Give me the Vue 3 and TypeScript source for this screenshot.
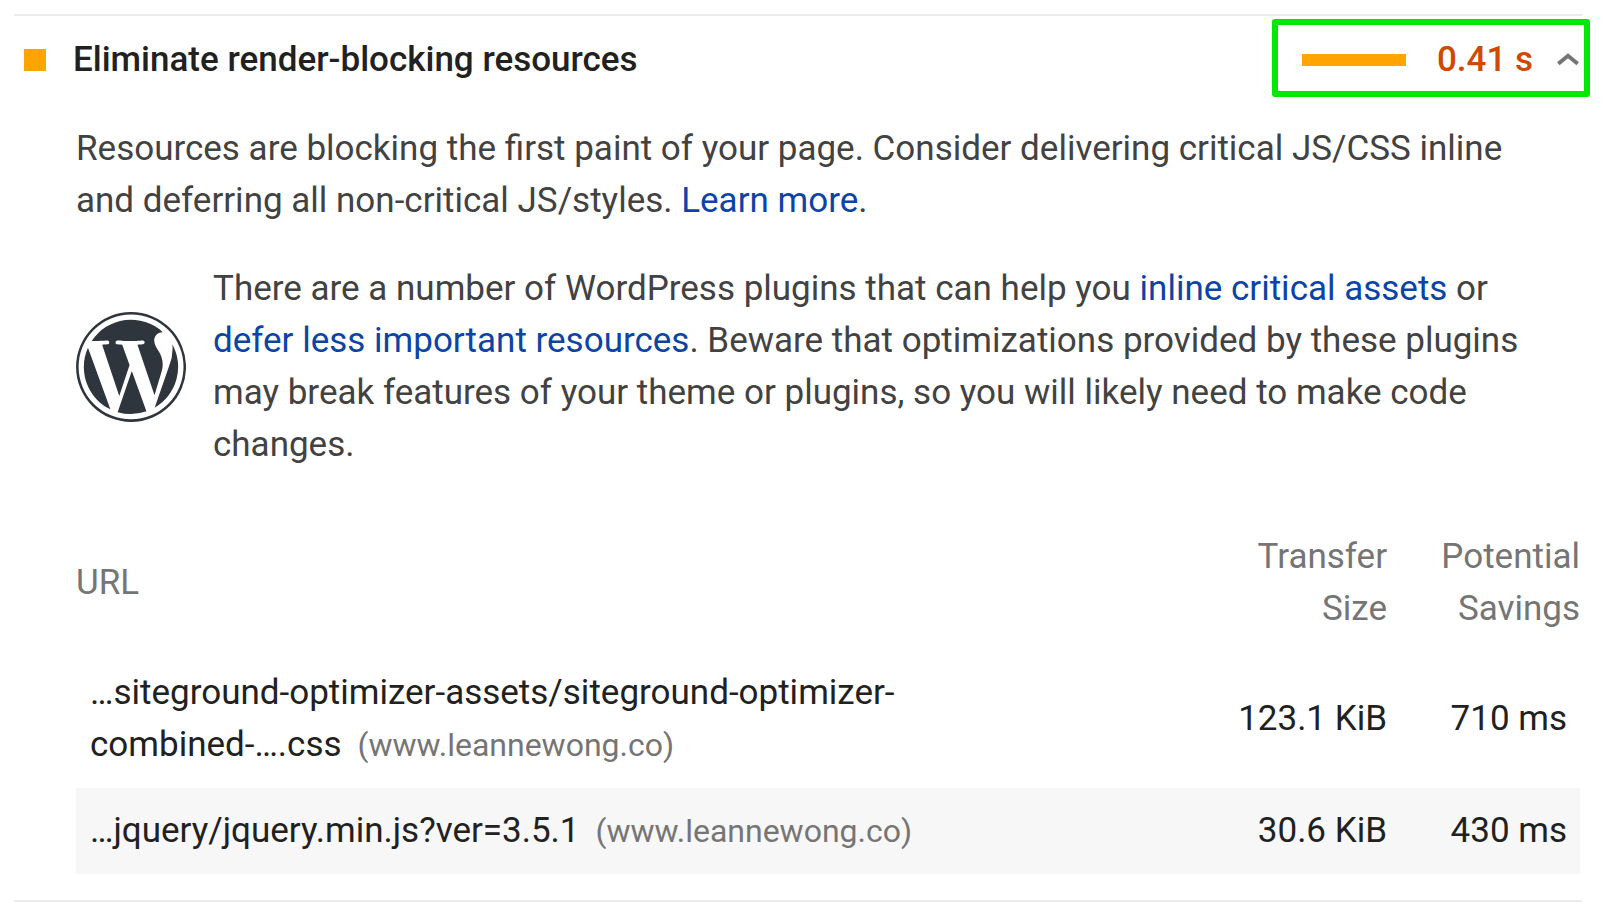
<script setup lang="ts">
import { ref } from 'vue'

interface BlockingResource {
  path: string
  host: string
  size: string
  savings: string
}

const resources: BlockingResource[] = [
  {
    path: '…siteground-optimizer-assets/siteground-optimizer-combined-….css',
    host: 'www.leannewong.co',
    size: '123.1 KiB',
    savings: '710 ms',
  },
  {
    path: '…jquery/jquery.min.js?ver=3.5.1',
    host: 'www.leannewong.co',
    size: '30.6 KiB',
    savings: '430 ms',
  },
]

const open = ref(true)
</script>

<template>
  <main class="report">
    <section class="audit">
      <h2 class="heading">
        <button
          class="summary"
          type="button"
          :aria-expanded="open"
          aria-controls="audit-details"
          @click="open = !open"
        >
          <span class="marker" aria-hidden="true"></span>
          <span class="title">Eliminate render-blocking resources</span>
          <span class="metric">
            <span class="bar" aria-hidden="true"></span>
            <span class="value">0.41 s</span>
            <svg
              class="chevron"
              :class="{ closed: !open }"
              viewBox="0 0 22 12"
              aria-hidden="true"
            >
              <path d="M1.3 9.8 11 1.8l9.7 8" />
            </svg>
          </span>
        </button>
      </h2>

      <div v-show="open" id="audit-details" class="details">
        <p class="text">
          Resources are blocking the first paint of your page. Consider delivering critical JS/CSS
          inline and deferring all non-critical JS/styles. <a href="#learn-more">Learn more</a>.
        </p>

        <div class="stack-pack">
          <svg class="logo" viewBox="0 0 122.6 122.7" role="img" aria-label="WordPress">
            <path
              d="M8.7 61.3c0 20.8 12.1 38.7 29.6 47.3l-25-68.7c-3 6.5-4.6 13.7-4.6 21.4zM96.7 58.6c0-6.5-2.3-11-4.3-14.5-2.7-4.3-5.2-8-5.2-12.3 0-4.8 3.7-9.3 8.9-9.3h.7a52.4 52.4 0 0 0-79.4 9.9h3.3c5.5 0 14-.6 14-.6 2.9-.2 3.2 4 .4 4.3 0 0-2.9.4-6 .5l19.1 57L59.7 59l-8.2-22.5c-2.8-.1-5.5-.5-5.5-.5-2.8-.1-2.5-4.5.3-4.3 0 0 8.7.7 13.9.7 5.5 0 14-.7 14-.7 2.8-.2 3.2 4 .3 4.3 0 0-2.8.4-6 .5l19 56.5 5.2-17.5c2.3-7.3 4-12.5 4-17z"
            />
            <path
              d="M62.2 65.9l-15.8 45.8a52.6 52.6 0 0 0 32.3-.9l-.4-.7zM107.4 36a49.6 49.6 0 0 1-3.6 24.2l-16.1 46.5A52.5 52.5 0 0 0 107.4 36z"
            />
            <path
              d="M61.3 0a61.3 61.3 0 1 0 .1 122.7A61.3 61.3 0 0 0 61.3 0zm0 119.7a58.5 58.5 0 1 1 .1-117 58.5 58.5 0 0 1-.1 117z"
            />
          </svg>
          <p class="text">
            There are a number of WordPress plugins that can help you
            <a href="#inline-critical-assets">inline critical assets</a> or
            <a href="#defer-resources">defer less important resources</a>. Beware that
            optimizations provided by these plugins may break features of your theme or plugins, so
            you will likely need to make code changes.
          </p>
        </div>

        <table class="resources">
          <colgroup>
            <col class="col-url" />
            <col />
            <col class="col-savings" />
          </colgroup>
          <thead>
            <tr>
              <th class="url" scope="col">URL</th>
              <th scope="col">Transfer<br />Size</th>
              <th scope="col">Potential<br />Savings</th>
            </tr>
          </thead>
          <tbody>
            <tr v-for="item in resources" :key="item.path">
              <td class="url">
                <a class="path" href="#resource">{{ item.path }}</a>
                <span class="host">({{ item.host }})</span>
              </td>
              <td class="size">{{ item.size }}</td>
              <td>{{ item.savings }}</td>
            </tr>
          </tbody>
        </table>
      </div>
    </section>
  </main>
</template>

<style>
body {
  margin: 0;
  background: #fff;
}
</style>

<style scoped>
.report {
  padding: 14px 22px 18px 14px;
  font-family: Roboto, "Liberation Sans", sans-serif;
  font-size: 35px;
  line-height: 52px;
  color: #212121;
}

.audit {
  border-top: 2px solid #ebebeb;
  border-bottom: 2px solid #ebebeb;
}

.heading {
  margin: 0;
  font-size: inherit;
}

.summary {
  display: flex;
  align-items: center;
  width: 100%;
  padding: 18px 3px 18px 10px;
  border: 0;
  background: none;
  font: inherit;
  font-weight: 500;
  color: inherit;
  text-align: left;
  cursor: pointer;
}

.marker {
  flex: none;
  width: 22px;
  height: 22px;
  margin-right: 27px;
  background: #ffa400;
}

.title {
  flex: 1;
}

.metric {
  position: relative;
  display: flex;
  align-items: center;
}

/* Highlight frame drawn over the savings summary */
.metric::after {
  content: "";
  position: absolute;
  inset: -15px -11px -11px -30px;
  border: 6px solid #00ea00;
  border-radius: 3px;
}

.bar {
  width: 104px;
  height: 12px;
  margin-right: 31px;
  background: #ffa400;
}

.value {
  color: #d04900;
}

.chevron {
  width: 22px;
  height: 12px;
  margin-left: 24px;
  fill: none;
  stroke: #757575;
  stroke-width: 4;
  overflow: visible;
}

.chevron.closed {
  transform: rotate(180deg);
}

.details {
  padding: 19px 2px 26px 62px;
}

.text {
  margin: 0;
  padding-right: 40px;
  color: #424242;
}

.text a {
  color: #0c44a6;
  text-decoration: none;
}

.stack-pack {
  display: flex;
  align-items: center;
  gap: 27px;
  margin: 36px 0 60px;
}

.stack-pack .text {
  flex: 1;
}

.logo {
  flex: none;
  width: 110px;
  height: 110px;
  fill: #2f353d;
}

.resources {
  width: 100%;
  border-collapse: collapse;
  table-layout: fixed;
}

.col-url {
  width: 62%;
}

.col-savings {
  width: 193px;
}

th {
  padding: 0 0 15px;
  font-weight: 400;
  text-align: right;
  color: #757575;
}

td {
  padding: 17px 13px 17px 0;
  text-align: right;
}

td.size {
  padding-right: 0;
}

th.url {
  text-align: left;
}

td.url {
  padding-left: 14px;
  text-align: left;
}

tbody tr:nth-child(even) {
  background: #f7f7f7;
}

.path {
  color: inherit;
  text-decoration: none;
}

.host {
  margin-left: 8px;
  padding-left: 8px;
  font-size: 32px;
  line-height: 1;
  color: #757575;
}
</style>
